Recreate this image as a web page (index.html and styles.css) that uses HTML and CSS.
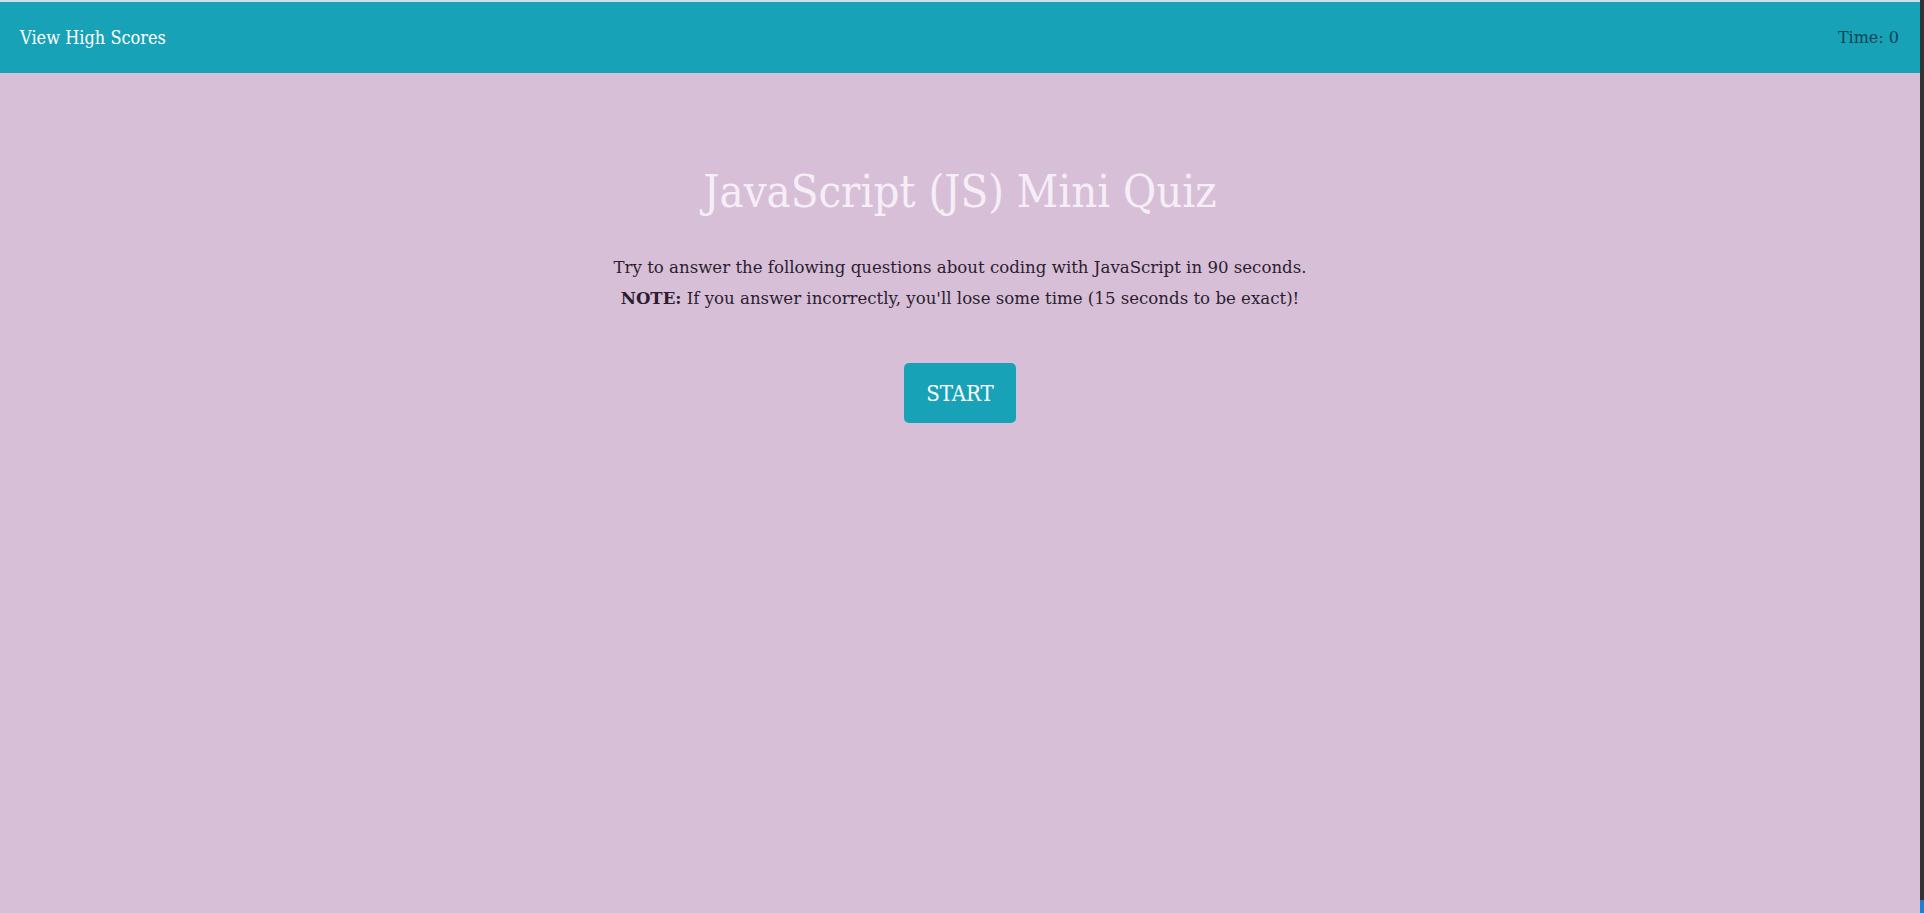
FILE: index.html
```html
<!DOCTYPE html>
<html lang="en">
<head>
<meta charset="utf-8">
<title>JavaScript (JS) Mini Quiz</title>
<link rel="stylesheet" href="styles.css">
</head>
<body>
<div class="page">
  <header class="topbar">
    <a class="scores-link" href="#">View High Scores</a>
    <span class="timer">Time: 0</span>
  </header>
  <main class="intro">
    <h1 class="title">JavaScript (JS) Mini Quiz</h1>
    <p class="lead">Try to answer the following questions about coding with JavaScript in 90 seconds.<br><strong>NOTE:</strong> If you answer incorrectly, you'll lose some time (15 seconds to be exact)!</p>
    <div class="actions">
      <button class="start-btn" type="button">START</button>
    </div>
  </main>
</div>
<div class="edge"><span class="edge-mark"></span></div>
</body>
</html>
```
FILE: styles.css
```css
html, body {
  margin: 0;
  padding: 0;
  height: 100%;
}
body {
  display: flex;
  background: #333333;
  font-family: "DejaVu Serif", serif;
}
.page {
  flex: 1;
  min-height: 913px;
  background: #d8bfd8;
  border-top: 2px solid #cfe1e7;
  box-sizing: border-box;
}
.edge {
  width: 4px;
  display: flex;
  flex-direction: column;
  justify-content: flex-end;
  background: #333333;
}
.edge-mark {
  display: block;
  height: 13px;
  background: #1f7fd0;
}
.topbar {
  height: 71px;
  background: #18a2b8;
  display: flex;
  align-items: center;
  justify-content: space-between;
  padding: 0 21px 0 20px;
}
.scores-link {
  color: #ffffff;
  text-decoration: none;
  font-family: "DejaVu Serif", serif;
  font-stretch: condensed;
  font-size: 18px;
}
.timer {
  font-family: "DejaVu Serif", serif;
  font-size: 16px;
  color: #0c4654;
}
.intro {
  text-align: center;
}
.title {
  margin: 92px 0 0;
  font-family: "DejaVu Serif", serif;
  font-stretch: condensed;
  font-size: 45px;
  line-height: 54px;
  font-weight: 400;
  color: #f6eef6;
}
.lead {
  font-family: "DejaVu Serif", serif;
  font-size: 16.6px;
  line-height: 30px;
  color: #2b1d2e;
  margin: 34px 0 0;
}
.lead strong {
  font-weight: 700;
}
.actions {
  margin-top: 49px;
  display: flex;
  justify-content: center;
}
.start-btn {
  width: 112px;
  height: 60px;
  padding: 0;
  border: none;
  border-radius: 5px;
  background: #18a2b8;
  color: #ffffff;
  font-family: "DejaVu Serif", serif;
  font-stretch: condensed;
  font-size: 22px;
  cursor: pointer;
}
```
